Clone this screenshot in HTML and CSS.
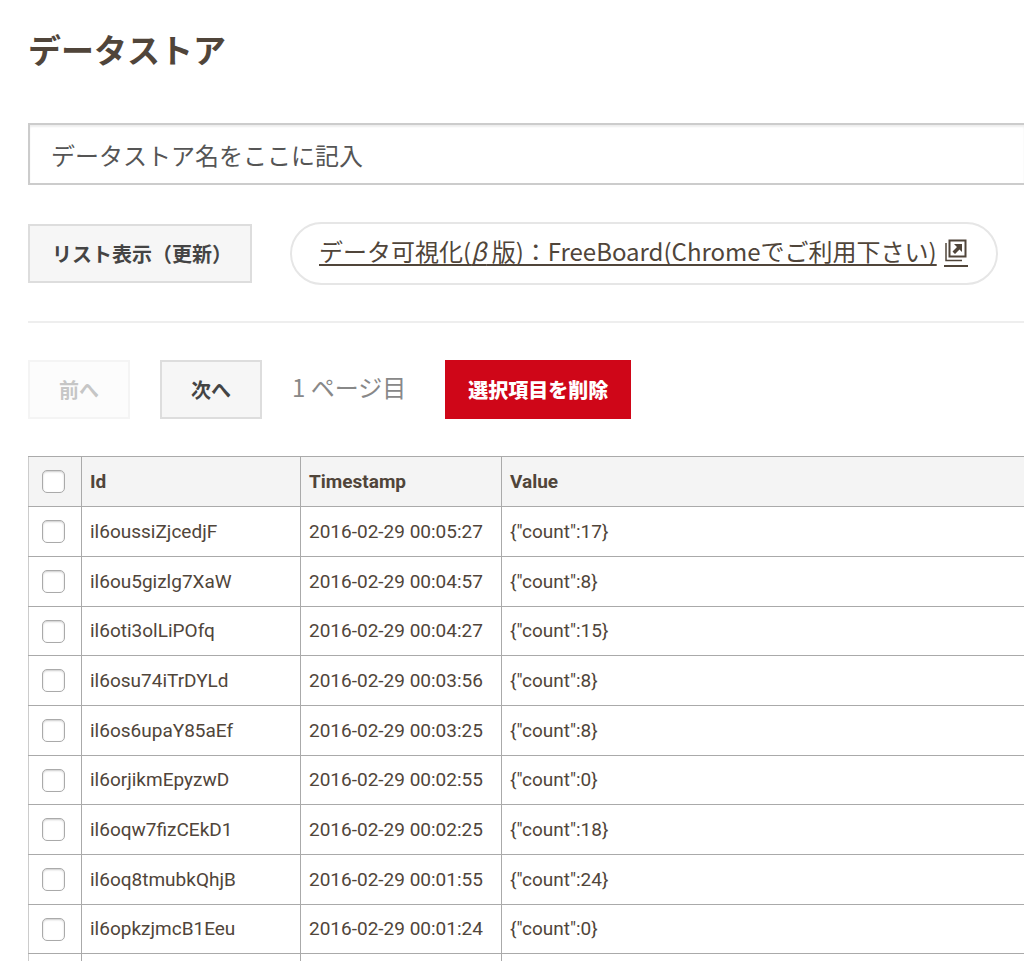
FILE: index.html
```html
<!DOCTYPE html>
<html lang="ja">
<head>
<meta charset="utf-8">
<title>データストア</title>
<link rel="stylesheet" href="styles.css">
</head>
<body>
<main class="page">
  <h1 class="title">データストア</h1>
  <input class="store-name" type="text" aria-label="データストア名" placeholder="データストア名をここに記入">
  <div class="actions">
    <button class="btn btn-list" type="button">リスト表示（更新）</button>
    <div class="pill">
      <a class="pill-link" href="#"><span class="pill-text">データ可視化(<i class="beta">β</i> 版)：FreeBoard(Chromeでご利用下さい)</span><svg class="ext" viewBox="0 0 24 24" aria-hidden="true"><path d="M5.500 1.500h16v16h-16z" fill="none" stroke="currentColor" stroke-width="2"/><path d="M2 4v17.500h16" fill="none" stroke="currentColor" stroke-width="1.500"/><path d="M10 5h8v8l-2.500-2.500-4.500 4.500-2.500-2.500 4.500-4.500z" fill="currentColor"/></svg></a>
    </div>
  </div>
  <hr class="rule">
  <div class="pager">
    <button class="btn btn-page" type="button" disabled>前へ</button>
    <button class="btn btn-page" type="button">次へ</button>
    <span class="page-no">1 ページ目</span>
    <button class="btn btn-delete" type="button">選択項目を削除</button>
  </div>
  <table class="records">
    <colgroup><col class="col-check"><col class="col-id"><col class="col-time"><col></colgroup>
    <thead>
      <tr><th><input class="check" type="checkbox" aria-label="すべて選択"></th><th>Id</th><th>Timestamp</th><th>Value</th></tr>
    </thead>
    <tbody>
      <tr><td><input class="check" type="checkbox" aria-label="il6oussiZjcedjF"></td><td>il6oussiZjcedjF</td><td>2016-02-29 00:05:27</td><td>{"count":17}</td></tr>
      <tr><td><input class="check" type="checkbox" aria-label="il6ou5gizlg7XaW"></td><td>il6ou5gizlg7XaW</td><td>2016-02-29 00:04:57</td><td>{"count":8}</td></tr>
      <tr><td><input class="check" type="checkbox" aria-label="il6oti3olLiPOfq"></td><td>il6oti3olLiPOfq</td><td>2016-02-29 00:04:27</td><td>{"count":15}</td></tr>
      <tr><td><input class="check" type="checkbox" aria-label="il6osu74iTrDYLd"></td><td>il6osu74iTrDYLd</td><td>2016-02-29 00:03:56</td><td>{"count":8}</td></tr>
      <tr><td><input class="check" type="checkbox" aria-label="il6os6upaY85aEf"></td><td>il6os6upaY85aEf</td><td>2016-02-29 00:03:25</td><td>{"count":8}</td></tr>
      <tr><td><input class="check" type="checkbox" aria-label="il6orjikmEpyzwD"></td><td>il6orjikmEpyzwD</td><td>2016-02-29 00:02:55</td><td>{"count":0}</td></tr>
      <tr><td><input class="check" type="checkbox" aria-label="il6oqw7fizCEkD1"></td><td>il6oqw7fizCEkD1</td><td>2016-02-29 00:02:25</td><td>{"count":18}</td></tr>
      <tr><td><input class="check" type="checkbox" aria-label="il6oq8tmubkQhjB"></td><td>il6oq8tmubkQhjB</td><td>2016-02-29 00:01:55</td><td>{"count":24}</td></tr>
      <tr><td><input class="check" type="checkbox" aria-label="il6opkzjmcB1Eeu"></td><td>il6opkzjmcB1Eeu</td><td>2016-02-29 00:01:24</td><td>{"count":0}</td></tr>
      <tr><td></td><td></td><td></td><td></td></tr>
    </tbody>
  </table>
</main>
</body>
</html>
```
FILE: styles.css
```css
* { box-sizing: border-box; }

body {
  margin: 0;
  background: #fff;
  color: #50453a;
  font-family: "Noto Sans CJK JP", sans-serif;
}

.page {
  height: 100vh;
  overflow: hidden;
  padding: 25px 0 0 28px;
}

.title {
  margin: 0 0 50px;
  font-size: 33px;
  line-height: 48px;
  font-weight: 700;
}

.store-name {
  display: block;
  width: 100%;
  height: 62px;
  padding: 0 23px 0 21px;
  border: 2px solid #ccc;
  border-right: 0;
  border-radius: 0;
  background: #fff;
  box-shadow: inset 0 2px 2px #eee;
  color: #555;
  font: 24px "Noto Sans CJK JP", sans-serif;
}
.store-name::placeholder { color: #555; opacity: 1; }

.actions {
  display: flex;
  align-items: center;
  gap: 38px;
  margin-top: 37px;
}

.btn {
  height: 59px;
  border: 2px solid #ddd;
  border-radius: 0;
  background: #f6f6f6;
  color: #444;
  font: 700 20px "Noto Sans CJK JP", sans-serif;
  white-space: nowrap;
}
.btn-list { padding: 0 18px 0 22px; }
.btn-page { width: 102px; padding: 0; }
.btn-page:disabled { opacity: 0.3; }
.btn-delete {
  margin-left: 9px;
  padding: 0 23px;
  border: 0;
  background: #cf0618;
  color: #fff;
  font-weight: 900;
}

.pill {
  padding: 9px 28px 15px 27px;
  border: 2px solid #e6e6e6;
  border-radius: 32px;
}
.pill-link {
  display: flex;
  align-items: flex-end;
  gap: 7px;
  color: #50453a;
  font-size: 24px;
  line-height: 35px;
  text-decoration: none;
  white-space: nowrap;
}
.pill-text {
  text-decoration: underline;
  text-decoration-thickness: 2px;
  text-underline-offset: 3px;
  text-decoration-skip-ink: none;
}
.beta { font-style: italic; }
.ext {
  width: 24px;
  height: 28px;
  padding-bottom: 2px;
  margin-bottom: 1px;
  border-bottom: 2px solid currentColor;
}

.rule {
  height: 2px;
  margin: 36px 0 37px;
  border: 0;
  background: #eee;
}

.pager {
  display: flex;
  align-items: center;
  gap: 30px;
  margin-bottom: 37px;
}
.page-no {
  padding-bottom: 6px;
  color: #888;
  font-size: 24px;
  line-height: 36px;
}

.records {
  width: 100%;
  table-layout: fixed;
  border-collapse: collapse;
  font-family: Roboto, "Noto Sans CJK JP", sans-serif;
  font-size: 19px;
  line-height: 28px;
}
.records tr { height: 50px; }
.records tbody tr:nth-child(3n) { height: 49px; }
.records th,
.records td {
  padding: 0 8px;
  border: 1px solid #aaa;
  text-align: left;
  white-space: nowrap;
}
.records th { background: #f4f4f4; font-weight: 700; }
.records th:last-child,
.records td:last-child { border-right: 0; }
.records th:first-child,
.records td:first-child { border-left-color: #ccc; padding: 0 0 0 13px; }
.col-check { width: 53px; }
.col-id { width: 219px; }
.col-time { width: 201px; }

.check {
  display: block;
  width: 23px;
  height: 23px;
  margin: 0;
  appearance: none;
  border: 1px solid #aaa;
  border-radius: 5px;
  background: #fff;
  box-shadow: inset 0 1px 2px #ccc;
}
```
